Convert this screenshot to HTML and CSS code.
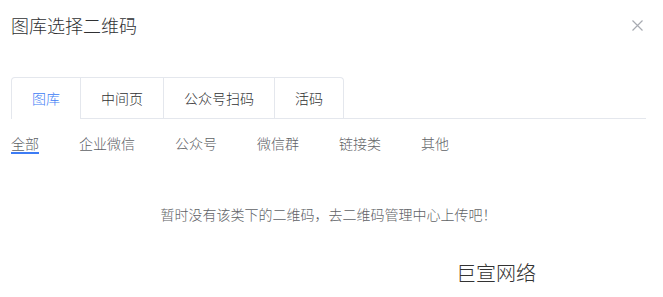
FILE: index.html
```html
<!DOCTYPE html>
<html lang="zh">
<head>
<meta charset="utf-8">
<title>图库选择二维码</title>
<link rel="stylesheet" href="styles.css">
</head>
<body>
<div class="dialog">
  <div class="dialog-header">
    <span class="dialog-title">图库选择二维码</span>
    <button class="dialog-close" aria-label="关闭">
      <svg width="11" height="11" viewBox="0 0 11 11"><path d="M0.5 0.5 L10.5 10.5 M10.5 0.5 L0.5 10.5" stroke="#a8abb2" stroke-width="1.2" fill="none"/></svg>
    </button>
  </div>
  <div class="dialog-body">
    <div class="tabs-header">
      <div class="tabs-nav">
        <div class="tab-item active">图库</div>
        <div class="tab-item">中间页</div>
        <div class="tab-item">公众号扫码</div>
        <div class="tab-item">活码</div>
      </div>
    </div>
    <div class="sub-tabs">
      <span class="sub-tab active">全部</span>
      <span class="sub-tab">企业微信</span>
      <span class="sub-tab">公众号</span>
      <span class="sub-tab">微信群</span>
      <span class="sub-tab">链接类</span>
      <span class="sub-tab">其他</span>
    </div>
    <div class="empty">暂时没有该类下的二维码，去二维码管理中心上传吧！</div>
    <div class="brand">巨宣网络</div>
  </div>
</div>
</body>
</html>
```

FILE: styles.css
```css
* { box-sizing: border-box; }
html, body {
  margin: 0;
  padding: 0;
  background: #ffffff;
}
body {
  font-family: "Noto Sans CJK SC", "Noto Sans", "Liberation Sans", sans-serif;
  font-weight: 300;
  color: #303133;
  width: 663px;
  height: 297px;
  overflow: hidden;
}
.dialog {
  width: 663px;
}
.dialog-header {
  display: flex;
  justify-content: space-between;
  align-items: center;
  padding: 13px 20px 0 11px;
}
.dialog-title {
  font-size: 18px;
  line-height: 24px;
  color: #303133;
}
.dialog-close {
  border: none;
  background: none;
  padding: 0;
  width: 11px;
  height: 11px;
  display: flex;
  cursor: pointer;
}
.dialog-body {
  padding: 40px 17px 0 11px;
}
.tabs-header {
  display: flex;
  border-bottom: 1px solid #e4e7ed;
}
.tabs-nav {
  display: flex;
  border: 1px solid #e4e7ed;
  border-bottom: none;
  border-radius: 4px 4px 0 0;
  margin-bottom: -1px;
}
.tab-item {
  height: 41px;
  line-height: 40px;
  padding: 0 20px;
  font-size: 14px;
  color: #303133;
  border-left: 1px solid #e4e7ed;
  border-bottom: 1px solid transparent;
}
.tab-item:first-child {
  border-left: none;
}
.tab-item.active {
  color: #3d7cf5;
  border-bottom-color: #ffffff;
}
.sub-tabs {
  display: flex;
  gap: 40px;
  margin-top: 15px;
}
.sub-tab {
  font-size: 14px;
  line-height: 18px;
  color: #606266;
  border-bottom: 2px solid transparent;
}
.sub-tab.active {
  border-bottom-color: #3d7cf5;
}
.empty {
  margin-top: 50px;
  text-align: center;
  font-size: 14px;
  line-height: 20px;
  color: #606266;
}
.brand {
  margin: 35px 0 0 445px;
  font-size: 20px;
  line-height: 28px;
  color: #333333;
}
```
